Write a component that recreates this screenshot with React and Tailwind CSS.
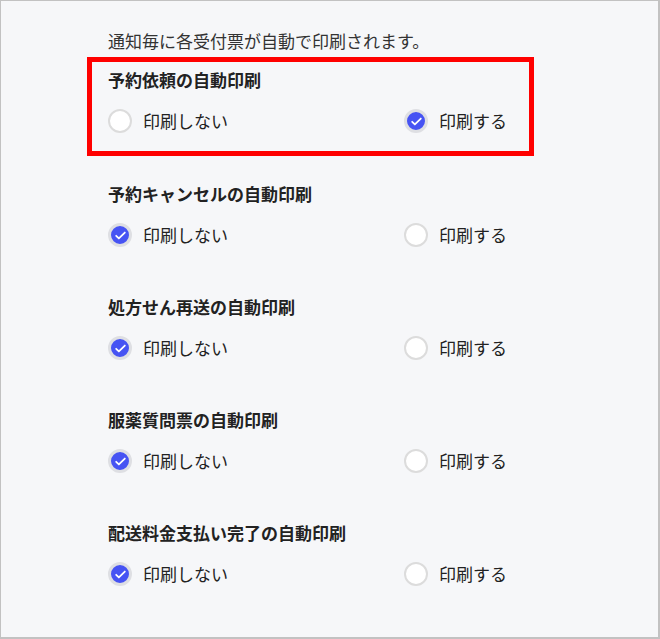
import React, { useState } from "react";

const sections = [
  { title: "予約依頼の自動印刷", value: "on", highlight: true },
  { title: "予約キャンセルの自動印刷", value: "off" },
  { title: "処方せん再送の自動印刷", value: "off" },
  { title: "服薬質問票の自動印刷", value: "off" },
  { title: "配送料金支払い完了の自動印刷", value: "off" },
];

const Radio = ({ checked, label, onClick }) => (
  <button onClick={onClick} className="flex items-center gap-[11px] text-left">
    {checked ? (
      <span className="w-[24px] h-[24px] rounded-full border-[3px] border-[#dedfe3] bg-[#4653f3] flex items-center justify-center">
        <svg viewBox="0 0 24 24" className="w-[13px] h-[13px]" fill="none" stroke="white" strokeWidth="3.2" strokeLinecap="round" strokeLinejoin="round">
          <path d="M4 12.5l5 5L20 6.5" />
        </svg>
      </span>
    ) : (
      <span className="w-[24px] h-[24px] rounded-full border-2 border-[#dcdcdc] bg-white" />
    )}
    <span className="text-[17px] leading-[24px] text-[#222]">{label}</span>
  </button>
);

export default function App() {
  const [values, setValues] = useState(sections.map((s) => s.value));

  const set = (i, v) => setValues(values.map((x, j) => (j === i ? v : x)));

  return (
    <div
      className="w-[660px] h-[639px] bg-[#f6f7f9] border-t border-l border-r-2 border-b-2 border-[#c2c2c2] pl-[107px] pt-[27px]"
      style={{ fontFamily: '"Noto Sans CJK JP", "Noto Sans", sans-serif' }}
    >
      <p className="text-[17px] text-[#333] leading-[26px]">
        通知毎に各受付票が自動で印刷されます。
      </p>
      <div className="flex flex-col gap-[47px] mt-[3px]">
        {sections.map((s, i) => (
          <div
            key={s.title}
            className={
              s.highlight
                ? "w-[447px] -ml-[21px] pl-[16px] pt-[5px] pb-[18px] border-[5px] border-[#ff0000] -mb-[22px]"
                : "w-[447px]"
            }
          >
            <h2 className="text-[17px] font-bold text-[#222] leading-[26px]">{s.title}</h2>
            <div className="flex mt-[16px]">
              <div className="w-[296px]">
                <Radio checked={values[i] === "off"} label="印刷しない" onClick={() => set(i, "off")} />
              </div>
              <Radio checked={values[i] === "on"} label="印刷する" onClick={() => set(i, "on")} />
            </div>
          </div>
        ))}
      </div>
    </div>
  );
}
